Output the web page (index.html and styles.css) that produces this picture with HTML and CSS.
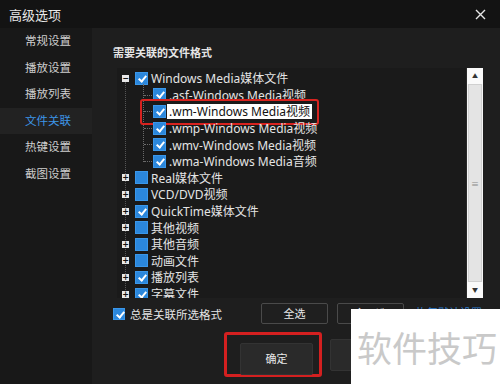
FILE: index.html
```html
<!DOCTYPE html>
<html>

<head>
    <title>高级选项</title>
    <link rel="stylesheet" href="styles.css">
</head>

<body>
    <div class="titlebar">
        <span class="title">高级选项</span>
        <svg class="close" width="11" height="11" viewBox="0 0 11 11">
            <path d="M1 1L10 10M10 1L1 10" stroke="#e6e6e6" stroke-width="1.4" />
        </svg>
    </div>

    <div class="window">
        <div class="sidebar">
            <div class="nav-item">常规设置</div>
            <div class="nav-item">播放设置</div>
            <div class="nav-item">播放列表</div>
            <div class="nav-item active">文件关联</div>
            <div class="nav-item">热键设置</div>
            <div class="nav-item">截图设置</div>
        </div>

        <div class="main">
            <div class="heading">需要关联的文件格式</div>

            <div class="tree-wrap">
                <div class="tree">
                    <div class="row">
                        <span class="exp">−</span>
                        <span class="cb checked"></span>
                        <span class="label">Windows Media媒体文件</span>
                    </div>
                    <div class="children">
                        <div class="row child">
                            <span class="cb checked"></span>
                            <span class="label">.asf-Windows Media视频</span>
                        </div>
                        <div class="row child marked">
                            <span class="cb checked"></span>
                            <span class="label selected">.wm-Windows Media视频</span>
                        </div>
                        <div class="row child">
                            <span class="cb checked"></span>
                            <span class="label">.wmp-Windows Media视频</span>
                        </div>
                        <div class="row child">
                            <span class="cb checked"></span>
                            <span class="label">.wmv-Windows Media视频</span>
                        </div>
                        <div class="row child">
                            <span class="cb checked"></span>
                            <span class="label">.wma-Windows Media音频</span>
                        </div>
                    </div>
                    <div class="row"><span class="exp">+</span><span class="cb"></span><span class="label">Real媒体文件</span></div>
                    <div class="row"><span class="exp">+</span><span class="cb"></span><span class="label">VCD/DVD视频</span></div>
                    <div class="row"><span class="exp">+</span><span class="cb checked"></span><span class="label">QuickTime媒体文件</span></div>
                    <div class="row"><span class="exp">+</span><span class="cb"></span><span class="label">其他视频</span></div>
                    <div class="row"><span class="exp">+</span><span class="cb"></span><span class="label">其他音频</span></div>
                    <div class="row"><span class="exp">+</span><span class="cb"></span><span class="label">动画文件</span></div>
                    <div class="row"><span class="exp">+</span><span class="cb checked"></span><span class="label">播放列表</span></div>
                    <div class="row"><span class="exp">+</span><span class="cb checked"></span><span class="label">字幕文件</span></div>
                </div>
                <div class="scrollbar">
                    <div class="sb-btn">▲</div>
                    <div class="sb-thumb"><span class="grip">≡</span></div>
                    <div class="sb-btn">▼</div>
                </div>
            </div>

            <div class="options">
                <div class="always">
                    <span class="cb checked"></span>
                    <span>总是关联所选格式</span>
                </div>
                <div class="btn small">全选</div>
                <div class="btn small">全不选</div>
                <a class="link">恢复默认设置</a>
            </div>

            <div class="actions">
                <div class="ok-mark">
                    <div class="btn big">确定</div>
                </div>
                <div class="btn big">取消</div>
            </div>
        </div>
    </div>

    <div class="watermark">软件技巧</div>
</body>

</html>
```

FILE: styles.css
```css
body {
    margin: 0;
    width: 500px;
    height: 384px;
    overflow: hidden;
    background-color: #1e1e1e;
    color: #e2e2e2;
    font-family: "Noto Sans", "Noto Sans CJK SC", sans-serif;
    position: relative;
}

.titlebar {
    height: 28px;
    background-color: #131313;
    display: flex;
    align-items: center;
    justify-content: space-between;
    padding: 0 14px 0 9px;
}

.title {
    font-size: 13px;
    color: #e8e8e8;
}

.window {
    display: flex;
    height: 356px;
}

.sidebar {
    width: 92px;
    background-color: #181818;
}

.nav-item {
    height: 26.6px;
    line-height: 26.6px;
    padding-left: 25px;
    font-size: 11.5px;
    color: #cfcfcf;
}

.nav-item.active {
    background-color: #222222;
    color: #3d95e6;
}

.main {
    flex: 1;
    background-color: #1e1e1e;
}

.heading {
    margin: 17px 0 0 21px;
    line-height: 16px;
    font-size: 11px;
    font-weight: bold;
    color: #e6e6e6;
}

.tree-wrap {
    display: flex;
    margin: 7px 0 0 25px;
    height: 230px;
}

.tree {
    width: 349px;
    background-color: #1a1a1a;
    padding-top: 2px;
    overflow: hidden;
    box-sizing: border-box;
    position: relative;
}

/* root level dotted line through the expanders */
.tree::before {
    content: "";
    position: absolute;
    left: 8px;
    top: 14px;
    bottom: 0;
    border-left: 1px dotted #555;
}

.row {
    height: 16.6px;
    display: flex;
    align-items: center;
    font-size: 12px;
    white-space: nowrap;
    position: relative;
}

.exp {
    width: 7px;
    height: 7px;
    margin: 0 6px 0 5px;
    background-color: #e8e8e8;
    color: #111;
    font-size: 8px;
    line-height: 7px;
    text-align: center;
    font-weight: bold;
    font-family: "DejaVu Sans", sans-serif;
    position: relative;
    z-index: 1;
}

.cb {
    width: 13px;
    height: 13px;
    background-color: #2b87dc;
    border: 1px solid #3a97ea;
    box-sizing: border-box;
    flex: none;
    position: relative;
}

.cb.checked::after {
    content: "";
    position: absolute;
    left: 3.5px;
    top: 1px;
    width: 3px;
    height: 6px;
    border: solid #ffffff;
    border-width: 0 2px 2px 0;
    transform: rotate(40deg);
}

.label {
    margin-left: 2px;
    color: #e4e4e4;
    padding: 0 1px;
}

.children {
    margin-left: 26px;
    position: relative;
}

.children::before {
    content: "";
    position: absolute;
    left: 0;
    top: -3px;
    bottom: 8px;
    border-left: 1px dotted #6a6a6a;
}

.row.child {
    padding-left: 10px;
}

.row.child::before {
    content: "";
    position: absolute;
    left: 1px;
    top: 8px;
    width: 8px;
    border-top: 1px dotted #6a6a6a;
}

.label.selected {
    background-color: #ffffff;
    color: #111111;
    line-height: 15px;
    padding: 0 2px;
    margin-left: 1px;
}

.row.marked::after {
    content: "";
    position: absolute;
    left: -3px;
    top: -4px;
    width: 175px;
    height: 22px;
    border: 2px solid #d8231f;
    border-radius: 3px;
}

.scrollbar {
    width: 16px;
    background-color: #f4f4f4;
    display: flex;
    flex-direction: column;
    border-left: 1px solid #2a2a2a;
}

.sb-btn {
    height: 16px;
    font-size: 6px;
    color: #333;
    text-align: center;
    line-height: 16px;
    background-color: #fafafa;
}

.sb-thumb {
    flex: 1;
    margin: 0 1px;
    background-color: #e4e4e4;
    border: 1px solid #d0d0d0;
    display: flex;
    align-items: center;
    justify-content: center;
}

.grip {
    font-size: 8px;
    color: #888;
}

.options {
    display: flex;
    align-items: center;
    margin: 5px 0 0 21px;
    height: 21px;
}

.always {
    display: flex;
    align-items: center;
    width: 148px;
    font-size: 11.5px;
    color: #e4e4e4;
}

.always .cb {
    width: 12px;
    height: 12px;
    margin-right: 5px;
}

.btn {
    background-color: #1f1f1f;
    border: 1px solid #4a4a4a;
    border-radius: 2px;
    color: #e8e8e8;
    font-size: 11px;
    text-align: center;
    box-sizing: border-box;
}

.btn.small {
    width: 67px;
    height: 21px;
    line-height: 19px;
    margin-right: 9px;
}

.link {
    margin: 0 0 4px 3px;
    font-size: 11px;
    color: #2d7fd0;
}

.actions {
    display: flex;
    align-items: center;
    margin: 8px 0 0 132px;
}

.ok-mark {
    border: 3px solid #d42020;
    border-radius: 3px;
    padding: 8px 6px 0 13px;
    height: 45px;
    box-sizing: border-box;
}

.btn.big {
    width: 73px;
    height: 32px;
    line-height: 30px;
    background-color: #2a2a2a;
    border-color: #333;
}

.actions > .btn.big {
    margin-left: 8px;
}

.watermark {
    position: absolute;
    left: 351px;
    top: 309px;
    right: 0;
    bottom: 0;
    background-color: #ffffff;
    color: #c9c9c9;
    font-size: 35px;
    line-height: 75px;
    padding-left: 6px;
    font-family: "Noto Sans CJK SC", sans-serif;
}
```
